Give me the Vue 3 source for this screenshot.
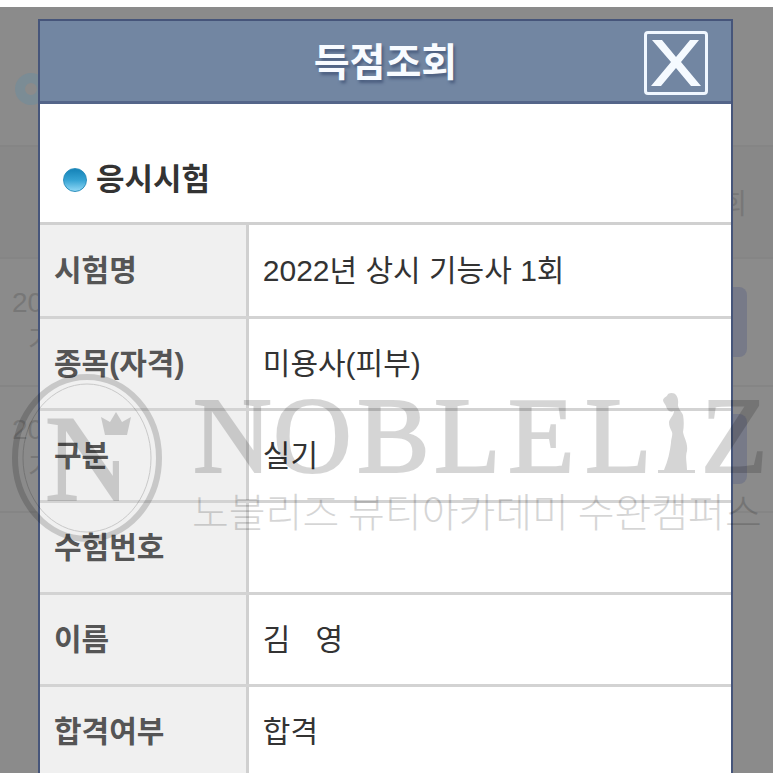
<script setup>
const rows = [
  { label: '시험명', value: '2022년 상시 기능사 1회' },
  { label: '종목(자격)', value: '미용사(피부)' },
  { label: '구분', value: '실기' },
  { label: '수험번호', value: '' },
  { label: '이름', value: '김\u00a0\u00a0\u00a0영' },
  { label: '합격여부', value: '합격' },
]
</script>

<template>
  <div class="page">
    <div class="behind" aria-hidden="true">
      <div class="behind-title"><span class="ring"></span></div>
      <div class="behind-row behind-head"><span></span><span class="behind-col">회</span></div>
      <div v-for="n in 2" :key="n" class="behind-row">
        <div class="behind-text"><span>20</span><span class="second">기</span></div>
        <span class="behind-button"></span>
      </div>
    </div>

    <div class="overlay">
      <section class="dialog" role="dialog" aria-labelledby="dialog-title">
        <header class="bar">
          <h1 id="dialog-title">득점조회</h1>
          <button class="close" type="button" aria-label="닫기">
            <svg viewBox="0 0 50 46" width="50" height="46">
              <path d="M1 0H11L25 17L39 0H48L30 22L50 46H40L25 28L10 46H0L20 22Z" fill="#f5faff" />
            </svg>
          </button>
        </header>
        <h2 class="heading"><span class="dot"></span>응시시험</h2>
        <table>
          <tbody>
            <tr v-for="row in rows" :key="row.label">
              <th scope="row">{{ row.label }}</th>
              <td>{{ row.value }}</td>
            </tr>
          </tbody>
        </table>
      </section>
    </div>

    <svg class="watermark" viewBox="0 0 773 200" aria-hidden="true">
      <defs>
        <clipPath id="monogram-clip">
          <path d="M30 40H78L108 101H119V160H30Z" />
        </clipPath>
      </defs>
      <g fill="none" stroke="#000">
        <ellipse cx="87" cy="98" rx="72" ry="81" stroke-width="6" />
        <ellipse cx="87" cy="98" rx="64" ry="74" stroke-width="1" />
      </g>
      <text class="latin" x="45" y="140" font-size="122" clip-path="url(#monogram-clip)">N</text>
      <path d="M101 57L110 62L116 52L122 62L131 57L127 75H105Z" />
      <text class="latin" x="193 273 357 434 508 585" y="112" font-size="109">NOBLEL</text>
      <path d="M663 40C664 37 667 37 668 34C671 32 675 33 676 35C679 39 678 43 678 46C679 50 682 52 683 55C684 61 684 66 683 72C684 78 688 83 687 91C685 97 687 103 687 110H695V113H658V110H664C668 101 670 91 671 83C671 79 673 75 672 72C670 68 669 66 669 62C670 58 674 55 674 51C670 53 667 50 666 46C665 44 663 42 663 40Z" />
      <text class="latin" x="701" y="112" font-size="109">Z</text>
      <text class="korean" x="192" y="167" font-size="40">노블리즈 뷰티아카데미 수완캠퍼스</text>
    </svg>
  </div>
</template>

<style>
body {
  margin: 0;
  background: #fff;
}
</style>

<style scoped>
.page {
  position: relative;
  box-sizing: border-box;
  height: 100vh;
  padding-top: 7px;
  overflow: hidden;
  font-family: "Liberation Sans", "Noto Sans CJK KR", sans-serif;
  background: #fff;
}

.behind {
  height: 100%;
  color: #777;
  background: #8b8b8b;
  font-size: 28px;
}

.behind-title {
  box-sizing: border-box;
  height: 138px;
  padding: 66px 15px 0;
}

.ring {
  display: block;
  box-sizing: border-box;
  width: 32px;
  height: 32px;
  border: 10px solid #7b8c95;
  border-radius: 50%;
}

.behind-row {
  display: flex;
  box-sizing: border-box;
  justify-content: space-between;
  align-items: center;
  height: 128px;
  padding: 0 26px 0 12px;
  border-top: 2px solid #858585;
}

.behind-row:last-child {
  border-bottom: 2px solid #858585;
}

.behind-head {
  height: 112px;
  background: #888;
}

.behind-text {
  display: flex;
  flex-direction: column;
  line-height: 38px;
}

.second {
  padding-left: 16px;
}

.behind-button {
  width: 60px;
  height: 70px;
  border-radius: 8px;
  background: #777a88;
}

.overlay {
  position: absolute;
  inset: 0;
  padding: 19px 40px 0 38px;
}

.dialog {
  border: 2px solid #46557a;
  border-bottom: 0;
  background: #fff;
}

.bar {
  display: grid;
  grid-template-columns: 1fr auto 1fr;
  align-items: center;
  box-sizing: border-box;
  height: 83px;
  padding: 3px 23px 0;
  border-bottom: 3px solid #546589;
  background: #7286a2;
}

h1 {
  grid-column: 2;
  margin: 0;
  color: #f8fbff;
  font-size: 39px;
  line-height: 56px;
  text-shadow: 2px 3px 3px #4c5f80;
}

.close {
  display: flex;
  justify-self: end;
  justify-content: center;
  align-items: center;
  box-sizing: border-box;
  width: 64px;
  height: 64px;
  padding: 0;
  border: 3px solid #f0f7ff;
  border-radius: 4px;
  background: transparent;
}

.heading {
  display: flex;
  align-items: center;
  gap: 9px;
  box-sizing: border-box;
  height: 118px;
  margin: 0;
  padding: 34px 23px 0;
  color: #333;
  font-size: 31px;
  line-height: 46px;
}

.dot {
  box-sizing: border-box;
  width: 24px;
  height: 24px;
  border: 1px solid #2c8fbd;
  border-radius: 50%;
  background: linear-gradient(#1583b8, #35a3d3 50%, #8fd7f5);
}

table {
  width: 100%;
  table-layout: fixed;
  border-collapse: collapse;
  border-top: 3px solid #d0d0d0;
}

th,
td {
  box-sizing: border-box;
  height: 92px;
  padding: 0 14px;
  border-bottom: 3px solid #d3d3d3;
  font-size: 30px;
  line-height: 44px;
  text-align: left;
}

tr:first-child th,
tr:first-child td {
  height: 94px;
}

th {
  width: 30%;
  border-right: 3px solid #d0d0d0;
  color: #555;
  background: #f0f0f0;
}

td {
  color: #333;
  font-weight: 400;
}

.watermark {
  position: absolute;
  top: 360px;
  left: 0;
  width: 100%;
  opacity: 0.16;
  pointer-events: none;
}

.latin {
  font-family: "Liberation Serif", serif;
  stroke: #000;
  stroke-width: 2px;
}

.korean {
  font-family: "Noto Sans CJK KR", sans-serif;
  font-weight: 300;
}
</style>
